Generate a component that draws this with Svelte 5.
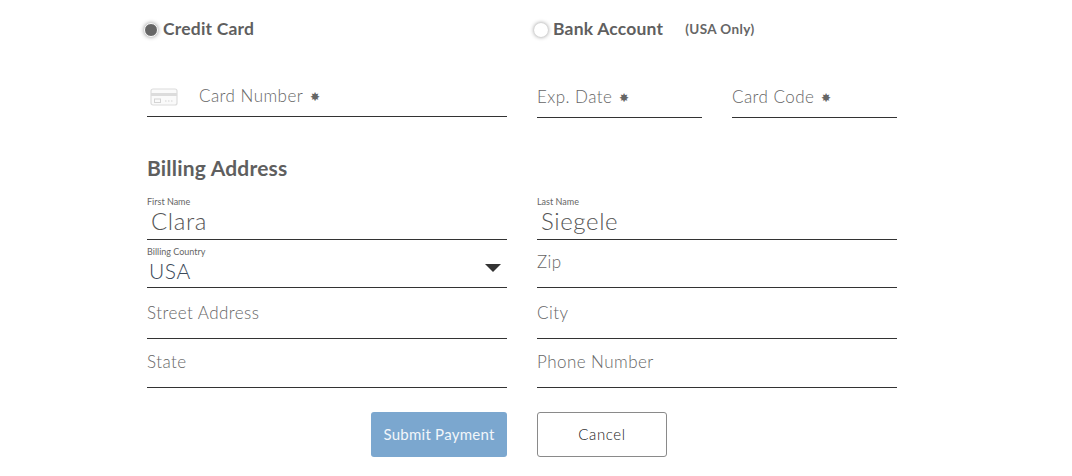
<script>
	const rows = [
		{ left: 'Street Address', right: 'City', cls: 'street' },
		{ left: 'State', right: 'Phone Number', cls: 'state' }
	];
</script>

<div class="page">
	<div class="methods">
		<label class="method">
			<span class="radio checked"></span>
			<span class="method-name">Credit Card</span>
		</label>
		<label class="method">
			<span class="radio"></span>
			<span class="method-name">Bank Account</span>
			<span class="usa">(USA Only)</span>
		</label>
	</div>

	<div class="columns card-row">
		<div class="field card-number">
			<svg class="card-icon" width="28" height="18" viewBox="0 0 28 18" fill="none">
				<rect x="1" y="1" width="26" height="16" rx="2" fill="#fafafa" stroke="#dcdcdc" stroke-width="1.2" />
				<rect x="1" y="5" width="26" height="3" fill="#dcdcdc" />
				<rect x="4.5" y="11" width="6" height="3.5" stroke="#d4d4d4" />
				<path d="M15 13h1.5M18 13h1.5M21 13h1.5" stroke="#d4d4d4" />
			</svg>
			<span class="placeholder">Card Number <i class="req">✸</i></span>
		</div>
		<div class="pair">
			<div class="field exp"><span class="placeholder">Exp. Date <i class="req">✸</i></span></div>
			<div class="field exp"><span class="placeholder">Card Code <i class="req">✸</i></span></div>
		</div>
	</div>

	<h2>Billing Address</h2>

	<div class="columns name-row">
		<div class="field filled">
			<span class="tiny">First Name</span>
			<span class="value indent">Clara</span>
		</div>
		<div class="field filled">
			<span class="tiny">Last Name</span>
			<span class="value indent">Siegele</span>
		</div>
	</div>

	<div class="columns country-row">
		<div class="field filled select">
			<span class="tiny">Billing Country</span>
			<span class="value usa-value">USA</span>
			<span class="caret"></span>
		</div>
		<div class="field"><span class="placeholder">Zip</span></div>
	</div>

	{#each rows as row}
		<div class="columns {row.cls}">
			<div class="field"><span class="placeholder">{row.left}</span></div>
			<div class="field"><span class="placeholder">{row.right}</span></div>
		</div>
	{/each}

	<div class="columns actions">
		<div class="submit-wrap"><button class="submit">Submit Payment</button></div>
		<div><button class="cancel">Cancel</button></div>
	</div>
</div>

<style>
	:global(body) {
		margin: 0;
		background: #fff;
	}

	.page {
		width: 750px;
		height: 476px;
		margin-left: 147px;
		font-family: Lato, 'Open Sans', sans-serif;
		color: #666;
	}

	.methods {
		display: grid;
		grid-template-columns: 360px 360px;
		column-gap: 30px;
		height: 59px;
		box-sizing: border-box;
		padding-top: 20px;
	}

	.method {
		display: flex;
		align-items: center;
		height: 20px;
		margin-left: -3px;
	}

	.radio {
		width: 14px;
		height: 14px;
		border-radius: 50%;
		background: #fff;
		box-shadow: 0 0 4px rgba(0, 0, 0, 0.45);
		margin-right: 5px;
		box-sizing: border-box;
		flex: none;
	}

	.radio.checked {
		background: #666;
		border: 1px solid #fff;
	}

	.method-name {
		font-size: 17.5px;
		font-weight: 700;
		color: #5f5f5f;
		letter-spacing: 0.2px;
		padding-bottom: 4px;
	}

	.usa {
		font-size: 13.5px;
		font-weight: 700;
		margin-left: 22px;
		letter-spacing: 0.4px;
		color: #666;
		padding-bottom: 2px;
	}

	.columns {
		display: grid;
		grid-template-columns: 360px 360px;
		column-gap: 30px;
	}

	.field {
		position: relative;
		display: flex;
		box-sizing: border-box;
		border-bottom: 1px solid #333;
		height: 100%;
		align-items: flex-end;
	}

	.card-row {
		height: 59px;
	}

	.card-row .field {
		height: 58px;
	}

	.card-number {
		align-items: flex-end;
	}

	.card-icon {
		margin: 0 21px 1px 3px;
	}

	.pair {
		display: grid;
		grid-template-columns: 165px 165px;
		column-gap: 30px;
		height: 59px;
	}

	.pair .field {
		height: 59px;
	}

	.placeholder {
		font-size: 17px;
		line-height: 20px;
		font-weight: 300;
		color: #666;
		letter-spacing: 0.45px;
	}

	.req {
		font-style: normal;
		font-size: 12px;
		margin-left: 2px;
		vertical-align: 1px;
		color: #666;
	}

	h2 {
		margin: 0;
		height: 62px;
		box-sizing: border-box;
		padding-top: 38px;
		font-size: 21px;
		line-height: 24px;
		font-weight: 700;
		color: #5f5f5f;
		letter-spacing: 0.2px;
	}

	.name-row {
		height: 61px;
		margin-top: -1px;
	}

	.country-row {
		height: 48px;
	}

	.street {
		height: 51px;
	}

	.state {
		height: 49px;
	}

	.field:not(.filled) {
		padding-bottom: 15px;
	}

	.card-row .field:not(.filled) {
		padding-bottom: 9px;
	}

	.filled {
		display: flex;
		flex-direction: column;
		align-items: flex-start;
		justify-content: flex-end;
		padding-bottom: 4px;
	}

	.select {
		padding-bottom: 3px;
	}

	.tiny {
		font-size: 9px;
		line-height: 10px;
		color: #666;
		font-weight: 400;
	}

	.value {
		font-size: 24px;
		line-height: 28px;
		font-weight: 300;
		color: #555;
		letter-spacing: 0.6px;
	}

	.indent {
		margin-left: 4px;
	}

	.usa-value {
		margin-left: 2px;
		font-size: 21px;
		line-height: 27px;
		color: #3c4a5a;
	}

	.caret {
		position: absolute;
		right: 6px;
		top: 24px;
		width: 0;
		height: 0;
		border-left: 8px solid transparent;
		border-right: 8px solid transparent;
		border-top: 8px solid #333;
	}

	.actions {
		margin-top: 24px;
	}

	.submit-wrap {
		display: flex;
		justify-content: flex-end;
	}

	button {
		height: 45px;
		border-radius: 3px;
		font-family: inherit;
		font-size: 15px;
		padding: 0 0 2px;
		letter-spacing: 0.25px;
	}

	.submit {
		width: 136px;
		background: #7ba7cf;
		color: #f2f6fa;
		border: 0;
	}

	.cancel {
		width: 130px;
		background: #fff;
		border: 1px solid #8a8a8a;
		color: #222;
		font-weight: 300;
		letter-spacing: 0.6px;
	}
</style>
